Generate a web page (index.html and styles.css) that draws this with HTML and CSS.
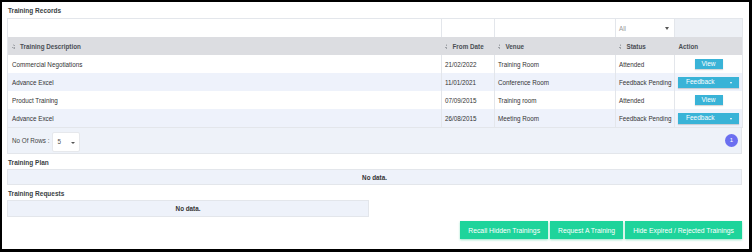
FILE: index.html
```html
<!DOCTYPE html>
<html lang="en">
<head>
  <meta charset="UTF-8">
  <title>Training</title>
  <link rel="stylesheet" href="styles.css">
</head>
<body>
<div class="frame">

  <div class="section-title">Training Records</div>

  <table class="grid">
    <colgroup>
      <col class="c-desc">
      <col class="c-date">
      <col class="c-venue">
      <col class="c-status">
      <col class="c-action">
    </colgroup>
    <tr class="filter-row">
      <td></td>
      <td></td>
      <td></td>
      <td class="filter-select"><span>All</span><i class="tri"></i></td>
      <td class="blank"></td>
    </tr>
    <tr class="head-row">
      <th><span class="sort"></span>Training Description</th>
      <th><span class="sort"></span>From Date</th>
      <th><span class="sort"></span>Venue</th>
      <th><span class="sort"></span>Status</th>
      <th class="plain">Action</th>
    </tr>
    <tr>
      <td>Commercial Negotiations</td>
      <td>21/02/2022</td>
      <td>Training Room</td>
      <td>Attended</td>
      <td class="act"><button class="btn-view">View</button></td>
    </tr>
    <tr class="alt">
      <td>Advance Excel</td>
      <td>11/01/2021</td>
      <td>Conference Room</td>
      <td>Feedback Pending</td>
      <td class="act"><button class="btn-feedback">Feedback<i class="caret"></i></button></td>
    </tr>
    <tr>
      <td>Product Training</td>
      <td>07/09/2015</td>
      <td>Training room</td>
      <td>Attended</td>
      <td class="act"><button class="btn-view">View</button></td>
    </tr>
    <tr class="alt">
      <td>Advance Excel</td>
      <td>26/08/2015</td>
      <td>Meeting Room</td>
      <td>Feedback Pending</td>
      <td class="act"><button class="btn-feedback">Feedback<i class="caret"></i></button></td>
    </tr>
  </table>

  <div class="pager">
    <div class="rows">
      No Of Rows :
      <div class="rows-select"><span>5</span><i class="chev"></i></div>
    </div>
    <span class="page-dot">1</span>
  </div>

  <div class="section-title sub">Training Plan</div>
  <div class="no-data">No data.</div>

  <div class="section-title sub">Training Requests</div>
  <div class="no-data half">No data.</div>

  <div class="actions">
    <button class="btn-green">Recall Hidden Trainings</button>
    <button class="btn-green">Request A Training</button>
    <button class="btn-green">Hide Expired / Rejected Trainings</button>
  </div>

</div>
</body>
</html>
```

FILE: styles.css
```css
body {
  margin: 0;
  font-family: "Liberation Sans", Arial, sans-serif;
  background: #000;
}
.frame {
  width: 752px;
  height: 252px;
  box-sizing: border-box;
  border-style: solid;
  border-color: #000;
  border-width: 2px 3px 3px 2px;
  background: #fff;
  padding: 0 7px 0 5px;
  color: #333;
  font-size: 6.3px;
}
.section-title {
  font-weight: bold;
  font-size: 6.5px;
  line-height: 8px;
  color: #3a3f44;
  padding: 5px 0 3px 1px;
}
.section-title.sub {
  padding: 5px 0 2px 1px;
}
.grid {
  width: 735px;
  border-collapse: collapse;
  table-layout: fixed;
  border: 1px solid #e3e6eb;
}
.c-desc { width: 434px; }
.c-date { width: 53px; }
.c-venue { width: 121px; }
.c-status { width: 59px; }
.c-action { width: 68px; }

.grid td, .grid th {
  padding: 0 0 0 3px;
  height: 18px;
  text-align: left;
  white-space: nowrap;
  overflow: hidden;
  border-left: 1px solid #e3e6eb;
}
.grid td:first-child, .grid th:first-child {
  border-left: none;
  padding-left: 4px;
}
.filter-row td {
  height: 18px;
  background: #fff;
  border-left: 1px solid #e3e6eb;
}
.filter-row td.blank {
  background: #eef1f6;
}
.filter-select {
  color: #999;
  position: relative;
}
.tri {
  position: absolute;
  right: 5px;
  top: 8px;
  border-left: 2.5px solid transparent;
  border-right: 2.5px solid transparent;
  border-top: 3px solid #555;
}
.head-row th {
  background: #dcdde1;
  color: #4a4e54;
  font-weight: bold;
  border-left: none;
}
.head-row th.plain {
  padding-left: 4px;
}
.sort {
  display: inline-block;
  width: 3px;
  height: 6px;
  margin-right: 5px;
  vertical-align: -1px;
  background:
    linear-gradient(to bottom right, transparent 50%, #a0a3a8 50%) left top / 50% 40% no-repeat,
    linear-gradient(to bottom left, transparent 50%, #a0a3a8 50%) right top / 50% 40% no-repeat,
    linear-gradient(to top right, transparent 50%, #a0a3a8 50%) left bottom / 50% 40% no-repeat,
    linear-gradient(to top left, transparent 50%, #a0a3a8 50%) right bottom / 50% 40% no-repeat;
}
.grid tr.alt td {
  background: #eef2fb;
}
.grid td.act {
  text-align: center;
  padding: 0;
}
.btn-view, .btn-feedback {
  border: none;
  background: #39b3d7;
  color: #fff;
  font-family: inherit;
  font-size: 6.5px;
  height: 10px;
  line-height: 10px;
  padding: 0;
  box-shadow: 0 1px 1px rgba(0, 0, 0, 0.15);
  vertical-align: middle;
}
.btn-view {
  width: 28px;
}
.btn-feedback {
  width: 61px;
  height: 11px;
  text-align: left;
  padding-left: 8px;
  position: relative;
}
.caret {
  position: absolute;
  right: 7px;
  top: 5px;
  border-left: 1.5px solid transparent;
  border-right: 1.5px solid transparent;
  border-top: 2px solid #fff;
}
.pager {
  width: 735px;
  box-sizing: border-box;
  height: 26px;
  background: #eef2f9;
  border: 1px solid #e3e6eb;
  border-top: none;
  display: flex;
  align-items: center;
  justify-content: space-between;
  padding: 0 3px 0 4px;
  color: #444;
}
.rows {
  display: flex;
  align-items: center;
  gap: 3px;
}
.rows-select {
  width: 28px;
  height: 20px;
  box-sizing: border-box;
  background: #fff;
  border: 1px solid #e6e8ec;
  border-radius: 2px;
  display: flex;
  align-items: center;
  justify-content: space-between;
  padding: 0 4px;
  color: #555;
  margin-top: 2px;
}
.chev {
  border-left: 2px solid transparent;
  border-right: 2px solid transparent;
  border-top: 2.5px solid #555;
  margin-top: 3px;
}
.page-dot {
  width: 13px;
  height: 13px;
  border-radius: 50%;
  background: #6b6ff0;
  color: #fff;
  font-size: 6px;
  line-height: 13px;
  text-align: center;
}
.no-data {
  width: 735px;
  box-sizing: border-box;
  height: 16px;
  line-height: 15px;
  background: #eef2fa;
  border: 1px solid #e3e6eb;
  text-align: center;
  font-weight: bold;
  color: #333;
}
.no-data.half {
  width: 362px;
  height: 17px;
}
.actions {
  display: flex;
  justify-content: flex-end;
  gap: 2px;
  width: 735px;
  margin-top: 4px;
}
.btn-green {
  border: none;
  background: #1ed49b;
  color: #fff;
  font-family: inherit;
  font-size: 6.8px;
  height: 18px;
  padding: 0 8px;
  box-shadow: 0 1px 2px rgba(30, 200, 140, 0.45);
}
```
